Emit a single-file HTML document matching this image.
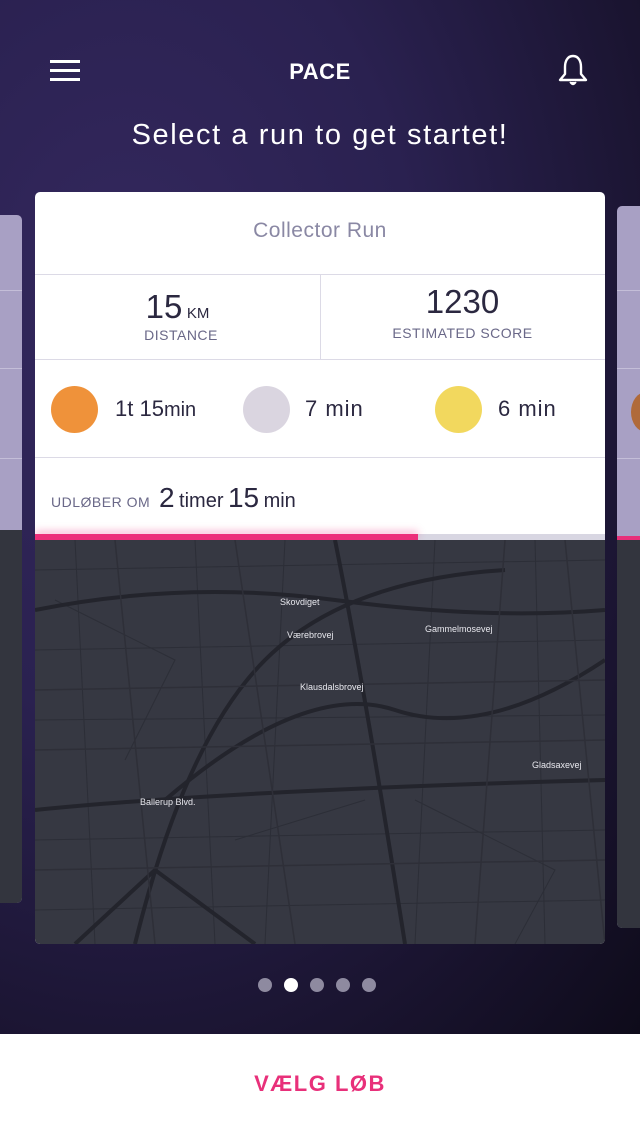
<!DOCTYPE html>
<html><head><meta charset="utf-8"><style>
*{margin:0;padding:0;box-sizing:border-box}
body{width:640px;height:1136px;overflow:hidden;font-family:"Liberation Sans",sans-serif;background:#1a1530;position:relative}
.bg{position:absolute;left:0;top:0;width:640px;height:1034px;background:radial-gradient(ellipse at 20% 30%,#34285e 0%,#2a2150 40%,#1a1430 75%,#0e0b1a 100%)}
.t{position:absolute;color:#fff}
.card{position:absolute;left:35px;top:192px;width:570px;height:752px;background:#fff;border-radius:5px;overflow:hidden}
.side{position:absolute;background:#a8a0c4;border-radius:5px;overflow:hidden}
.line{position:absolute;left:0;right:0;height:1px;background:#dcdae6}
.sl{position:absolute;left:0;right:0;height:1px;background:#c4bed8}
.dot{position:absolute;width:47px;height:47px;border-radius:50%;top:194px}
.num{position:absolute;color:#2b2840;font-size:22px;top:204px}
.map{position:absolute;left:0;top:348px;width:570px;height:404px;background:#363842}
.lbl{font-family:"Liberation Sans",sans-serif;font-size:9px;fill:#e8e8ee}
</style></head><body>
<div class="bg"></div>
<div class="side" style="left:-10px;top:215px;width:32px;height:688px">
 <div class="sl" style="top:75px"></div><div class="sl" style="top:153px"></div><div class="sl" style="top:243px"></div>
 <div style="position:absolute;top:315px;left:0;right:0;bottom:0;background:#33353e"></div></div>
<div class="side" style="left:617px;top:206px;width:40px;height:722px">
 <div class="sl" style="top:84px"></div><div class="sl" style="top:162px"></div><div class="sl" style="top:252px"></div>
 <div style="position:absolute;top:330px;left:0;right:0;height:4px;background:#e8307a"></div>
 <div style="position:absolute;top:334px;left:0;right:0;bottom:0;background:#33353e"></div>
 <div style="position:absolute;left:14px;top:186px;width:30px;height:40px;border-radius:50%;background:#b06a3a"></div></div>
<div style="position:absolute;left:50px;top:60px;width:30px;height:3px;background:#fff;box-shadow:0 9px 0 #fff,0 18px 0 #fff"></div>
<div class="t" style="left:0;width:640px;top:59px;text-align:center;font-weight:bold;font-size:22px;letter-spacing:.5px">PACE</div>
<svg style="position:absolute;left:557px;top:54px" width="32" height="34" viewBox="0 0 32 34"><path d="M16 2 C10 2 8 8 8 13 L8 20 L3 26 L29 26 L24 20 L24 13 C24 8 22 2 16 2Z" fill="none" stroke="#fff" stroke-width="2.4" stroke-linejoin="round"/><path d="M13 28 Q16 33 19 28" fill="#fff" stroke="#fff" stroke-width="1.5"/></svg>
<div class="t" style="left:0;width:640px;top:119px;text-align:center;font-size:29px;letter-spacing:1.6px">Select a run to get startet!</div>
<div class="card">
 <div style="position:absolute;top:27px;width:100%;text-align:center;font-size:21px;color:#8a88a4;letter-spacing:.5px">Collector Run</div>
 <div class="line" style="top:82px"></div>
 <div style="position:absolute;left:285px;top:82px;width:1px;height:85px;background:#dcdae6"></div>
 <div style="position:absolute;left:0;width:285px;top:96px;text-align:center;color:#2b2840"><span style="font-size:33px">15</span> <span style="font-size:15px">KM</span></div>
 <div style="position:absolute;left:0;width:292px;top:135px;text-align:center;color:#6a6888;font-size:14px;letter-spacing:.5px">DISTANCE</div>
 <div style="position:absolute;left:285px;width:285px;top:91px;text-align:center;color:#2b2840;font-size:33px">1230</div>
 <div style="position:absolute;left:285px;width:285px;top:133px;text-align:center;color:#6a6888;font-size:14px;letter-spacing:.5px">ESTIMATED SCORE</div>
 <div class="line" style="top:167px"></div>
 <div class="dot" style="left:16px;background:#ef923a"></div>
 <div class="num" style="left:80px">1t 15<span style="font-size:20px">min</span></div>
 <div class="dot" style="left:208px;background:#dad5e0"></div>
 <div class="num" style="left:270px;letter-spacing:1px">7 min</div>
 <div class="dot" style="left:400px;background:#f2d85e"></div>
 <div class="num" style="left:463px;letter-spacing:1px">6 min</div>
 <div class="line" style="top:265px"></div>
 <div style="position:absolute;left:16px;top:290px;color:#2b2840;white-space:nowrap"><span style="font-size:14px;color:#6a6888;letter-spacing:.5px">UDLØBER OM</span>&nbsp; <span style="font-size:28px">2</span> <span style="font-size:20px">timer</span> <span style="font-size:28px">15</span> <span style="font-size:20px">min</span></div>
 <div style="position:absolute;left:0;top:342px;width:570px;height:6px;background:#d8d6e2"></div>
 <div style="position:absolute;left:0;top:342px;width:383px;height:6px;background:#ec2f7a;box-shadow:0 -3px 8px rgba(236,47,122,.35)"></div>
 <div class="map"><svg width="570" height="404" viewBox="0 0 570 404">
  <g fill="none" stroke="#2c2e37" stroke-width="1">
   <path d="M0 30 L570 20"/><path d="M0 110 L570 100"/><path d="M0 180 L570 175"/><path d="M0 300 L570 290"/><path d="M0 370 L570 360"/>
   <path d="M40 0 L60 404"/><path d="M160 0 L180 404"/><path d="M250 0 L230 404"/><path d="M400 0 L380 404"/><path d="M500 0 L510 404"/>
   <path d="M20 60 L140 120 L90 220"/><path d="M380 260 L520 330 L480 404"/><path d="M200 300 L330 260"/>
  </g>
  <g fill="none" stroke="#23242c" stroke-width="4">
   <path d="M0 70 Q150 40 300 60 T570 70"/><path d="M300 0 Q330 150 370 404"/><path d="M0 270 Q200 250 570 240"/>
   <path d="M100 404 Q150 200 230 120 T470 30"/><path d="M570 120 Q450 200 360 170 T130 260"/><path d="M40 404 L120 330 L220 404"/>
  </g>
  <g fill="none" stroke="#2e2f38" stroke-width="1.5">
   <path d="M0 150 L570 140"/><path d="M80 0 L120 404"/><path d="M200 0 L260 404"/><path d="M470 0 L440 404"/><path d="M0 330 L570 320"/><path d="M530 0 L570 404"/><path d="M0 210 L570 200"/>
  </g>
  <text class="lbl" x="245" y="65">Skovdiget</text><text class="lbl" x="252" y="98">Værebrovej</text><text class="lbl" x="390" y="92">Gammelmosevej</text>
  <text class="lbl" x="265" y="150">Klausdalsbrovej</text><text class="lbl" x="105" y="265">Ballerup Blvd.</text><text class="lbl" x="497" y="228">Gladsaxevej</text>
 </svg></div>
</div>
<div style="position:absolute;left:258px;top:978px;width:14px;height:14px;border-radius:50%;background:#8e8aa0;box-shadow:52px 0 0 #8e8aa0,78px 0 0 #8e8aa0,104px 0 0 #8e8aa0"></div>
<div style="position:absolute;left:284px;top:978px;width:14px;height:14px;border-radius:50%;background:#fff"></div>
<div style="position:absolute;left:0;top:1034px;width:640px;height:102px;background:#fff"></div>
<div style="position:absolute;left:0;top:1071px;width:640px;text-align:center;color:#e8307a;font-size:22px;font-weight:bold;letter-spacing:1.5px">VÆLG LØB</div>
</body></html>
